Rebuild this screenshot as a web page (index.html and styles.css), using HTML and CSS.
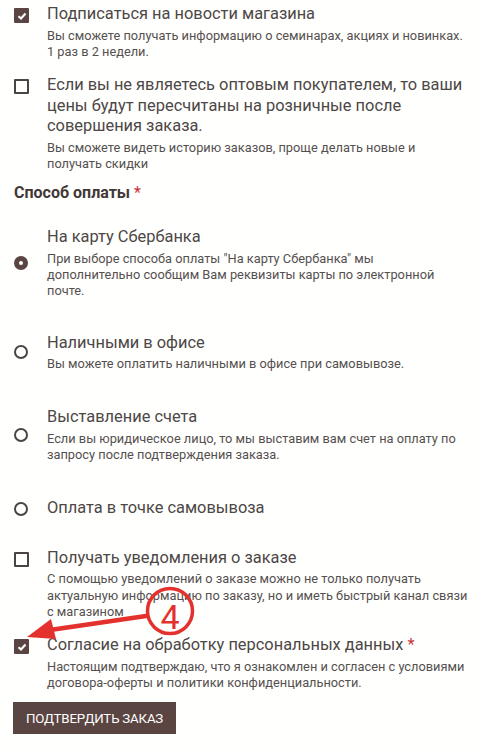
FILE: index.html
```html
<!DOCTYPE html>
<html lang="ru">
<head>
<meta charset="utf-8">
<link rel="stylesheet" href="styles.css">
</head>
<body>
<div class="form">
  <div class="opt opt-top">
    <span class="ctl"><span class="cb cb-on"><svg viewBox="0 0 14 14" width="14" height="14"><path d="M3.5 7.2 L6 9.5 L10.5 4.5" fill="none" stroke="#fff" stroke-width="2.2"/></svg></span></span>
    <div class="txt">
      <div class="ttl">Подписаться на новости магазина</div>
      <div class="dsc">Вы сможете получать информацию о семинарах, акциях и новинках. 1 раз в 2 недели.</div>
    </div>
  </div>
  <div class="opt opt-top">
    <span class="ctl"><span class="cb"></span></span>
    <div class="txt">
      <div class="ttl">Если вы не являетесь оптовым покупателем, то ваши цены будут пересчитаны на розничные после совершения заказа.</div>
      <div class="dsc">Вы сможете видеть историю заказов, проще делать новые и получать скидки</div>
    </div>
  </div>

  <div class="heading">Способ оплаты <span class="req">*</span></div>

  <div class="radios">
    <div class="opt opt-mid">
      <span class="ctl"><span class="rd rd-on"></span></span>
      <div class="txt">
        <div class="ttl">На карту Сбербанка</div>
        <div class="dsc">При выборе способа оплаты "На карту Сбербанка" мы дополнительно сообщим Вам реквизиты карты по электронной почте.</div>
      </div>
    </div>
    <div class="opt opt-mid">
      <span class="ctl"><span class="rd"></span></span>
      <div class="txt">
        <div class="ttl">Наличными в офисе</div>
        <div class="dsc">Вы можете оплатить наличными в офисе при самовывозе.</div>
      </div>
    </div>
    <div class="opt opt-mid">
      <span class="ctl"><span class="rd"></span></span>
      <div class="txt">
        <div class="ttl">Выставление счета</div>
        <div class="dsc">Если вы юридическое лицо, то мы выставим вам счет на оплату по запросу после подтверждения заказа.</div>
      </div>
    </div>
    <div class="opt opt-mid">
      <span class="ctl"><span class="rd"></span></span>
      <div class="txt">
        <div class="ttl">Оплата в точке самовывоза</div>
      </div>
    </div>
  </div>

  <div class="checks">
    <div class="opt opt-top">
      <span class="ctl"><span class="cb"></span></span>
      <div class="txt">
        <div class="ttl">Получать уведомления о заказе</div>
        <div class="dsc">С помощью уведомлений о заказе можно не только получать актуальную информацию по заказу, но и иметь быстрый канал связи с магазином</div>
      </div>
    </div>
    <div class="opt opt-top">
      <span class="ctl"><span class="cb cb-on"><svg viewBox="0 0 14 14" width="14" height="14"><path d="M3.5 7.2 L6 9.5 L10.5 4.5" fill="none" stroke="#fff" stroke-width="2.2"/></svg></span></span>
      <div class="txt">
        <div class="ttl">Согласие на обработку персональных данных<span class="req"> *</span></div>
        <div class="dsc">Настоящим подтверждаю, что я ознакомлен и согласен с условиями договора-оферты и политики конфиденциальности.</div>
      </div>
    </div>
  </div>

  <button class="btn">ПОДТВЕРДИТЬ ЗАКАЗ</button>
</div>

<svg class="annot" width="487" height="752" viewBox="0 0 487 752">
  <circle cx="170" cy="611" r="22.5" fill="none" stroke="#e3312d" stroke-width="3.5"/>
  <text x="170" y="629" text-anchor="middle" font-family="Roboto, sans-serif" font-size="34" fill="#e3312d">4</text>
  <path d="M146 616 L50 630" stroke="#e3312d" stroke-width="4.5" stroke-linecap="round" fill="none"/>
  <path d="M27 637 L51 619 L56 639 Z" fill="#e3312d"/>
</svg>
</body>
</html>
```

FILE: styles.css
```css
html, body {
  margin: 0;
  padding: 0;
  background: #fffffd;
}
body {
  font-family: Roboto, "Noto Sans", sans-serif;
  color: #4a4443;
  position: relative;
  width: 487px;
  height: 752px;
  overflow: hidden;
}
.form {
  padding: 4px 19px 0 14px;
  display: flex;
  flex-direction: column;
}
.opt {
  display: flex;
}
.opt-top {
  align-items: flex-start;
}
.opt-mid {
  align-items: center;
}
.opt + .opt {
  margin-top: 15px;
}
.ctl {
  width: 33px;
  flex: none;
  display: flex;
}
.opt-top .ctl {
  padding-top: 4px;
}
.txt {
  flex: 1;
}
.ttl {
  font-size: 16.4px;
  line-height: 20.5px;
  color: #4d4746;
  font-weight: 400;
}
.dsc {
  margin-top: 3px;
  font-size: 12.8px;
  line-height: 16.3px;
  color: #555050;
}
.cb {
  box-sizing: border-box;
  width: 15px;
  height: 15px;
  border: 2px solid #4a4443;
  border-radius: 1px;
  display: flex;
  align-items: center;
  justify-content: center;
}
.cb-on {
  background: #5a4542;
  border-color: #5a4542;
}
.cb svg {
  flex: none;
}
.rd {
  box-sizing: border-box;
  width: 14px;
  height: 14px;
  border: 2px solid #4a4443;
  border-radius: 50%;
}
.rd-on {
  background: #5a4542;
  border-color: #5a4542;
  position: relative;
}
.rd-on::after {
  content: "";
  position: absolute;
  left: 3px;
  top: 3px;
  width: 4px;
  height: 4px;
  border-radius: 50%;
  background: #fff;
}
.heading {
  margin-top: 11px;
  font-size: 16px;
  font-weight: 700;
  line-height: 20px;
  color: #3f3837;
}
.req {
  color: #c8323a;
  font-weight: 400;
}
.radios {
  margin-top: 24px;
  display: flex;
  flex-direction: column;
}
.radios .opt + .opt {
  margin-top: 35px;
}
.radios .opt:nth-child(2) {
  margin-top: 33px;
}
.checks {
  margin-top: 29px;
  display: flex;
  flex-direction: column;
}
.btn {
  margin-top: 11px;
  align-self: flex-start;
  margin-left: -1px;
  background: #5a4542;
  color: #fff;
  border: none;
  font-family: Roboto, sans-serif;
  font-size: 13.3px;
  height: 32px;
  padding: 0 13px;
  letter-spacing: -0.2px;
}
.annot {
  position: absolute;
  left: 0;
  top: 0;
  pointer-events: none;
}
```
